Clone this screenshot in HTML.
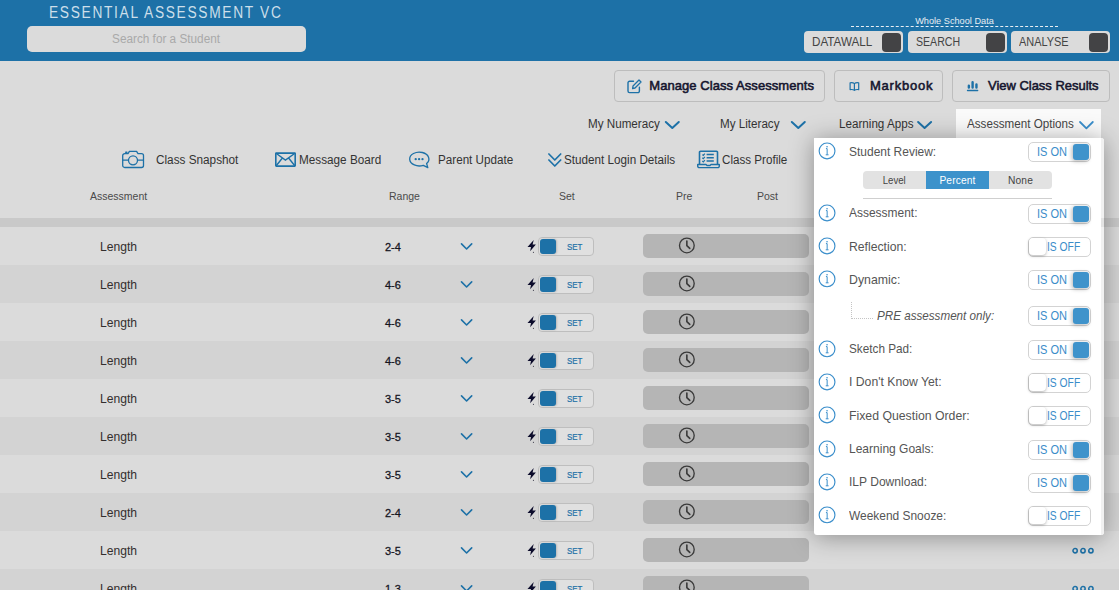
<!DOCTYPE html>
<html><head><meta charset="utf-8"><title>Essential Assessment</title>
<style>
*{box-sizing:border-box;margin:0;padding:0}
html,body{width:1119px;height:590px;overflow:hidden;background:#dbdbdb;font-family:"Liberation Sans",sans-serif;color:#333}
.abs{position:absolute}
svg{position:absolute;overflow:visible}
#hdr{position:absolute;left:0;top:0;width:1119px;height:61px;background:#1d71a7}
#title{position:absolute;left:49.4px;top:3px;font-size:16px;color:rgba(255,255,255,.78);white-space:nowrap;line-height:20px}
#search{position:absolute;left:27px;top:26px;width:279px;height:26px;background:#dbdbdb;border-radius:5px;text-align:center;font-size:12px;line-height:26px;color:#a9a9a9}
#wsd{position:absolute;left:851px;top:14px;width:207px;height:13px;padding-top:0.7px;border-bottom:1px dashed #e8eef3;text-align:center;font-size:9.2px;color:#e8eef3;line-height:12px}
.hb{position:absolute;top:31px;height:22px;width:99px;background:#dbdbdb;border-radius:4px;font-size:12px;color:#444;line-height:22px;padding-left:8px;white-space:nowrap}
.hb i{position:absolute;right:2px;top:2px;width:19px;height:19px;background:#434345;border-radius:4px}
.btn{position:absolute;top:70px;height:32px;border:1px solid #bdbdbd;border-radius:4px;background:#dcdcdc;font-size:13px;font-weight:normal;-webkit-text-stroke:0.55px #15152e;color:#15152e;line-height:30px;white-space:nowrap}
.nav{position:absolute;top:117px;font-size:12px;color:#333;line-height:14px;white-space:nowrap}
.lnk{position:absolute;top:152.8px;font-size:12px;color:#333;line-height:14px;white-space:nowrap}
.th{position:absolute;top:190px;font-size:10.5px;color:#4a4a4a;line-height:12px;white-space:nowrap}
.row{position:absolute;left:0;width:1119px;height:38px}
.row.d{background:#d3d3d3}
.nm{position:absolute;left:100px;top:12px;font-size:13px;line-height:15px;color:#332e2e;white-space:nowrap}
.rg{position:absolute;left:385px;top:13px;font-size:11.5px;line-height:15px;color:#15151f;-webkit-text-stroke:0.3px #15151f;white-space:nowrap}
.tg{position:absolute;left:538px;top:10px;width:56px;height:19px;border:1px solid #bebebe;border-radius:4px;background:#e0e0e0;font-size:9.5px;color:#1d71a7;-webkit-text-stroke:0.2px #1d71a7;line-height:17px;padding-left:28px;white-space:nowrap}
.tg i{position:absolute;left:1px;top:1px;width:16px;height:15px;background:#1d71a7;border-radius:3px;box-shadow:1px 0 2px rgba(0,0,0,.18)}
.bar{position:absolute;left:643px;top:7px;width:166px;height:24px;border-radius:5px;background:#b5b5b5}
#panel{position:absolute;left:814px;top:138px;width:290px;height:397px;background:#fff;border-radius:0 3px 3px 3px;box-shadow:0 2px 25px rgba(0,0,0,.36)}
#panel:after{content:"";position:absolute;right:0;top:0;width:3px;height:100%;border-radius:0 3px 3px 0;background:linear-gradient(#f1f1f1 80px,#e3e3e3 80px,#e3e3e3 89px,#f1f1f1 89px)}
#tab{position:absolute;left:956px;top:109px;width:145px;height:30px;background:#fafafa}
.opt{position:absolute;left:0;width:290px;height:20px}
.lb{position:absolute;left:35px;top:2px;font-size:13px;line-height:15px;color:#555;white-space:nowrap}
.sw{position:absolute;left:214px;top:0;width:63px;height:20px;border:1px solid #d3d3d3;border-radius:5px;background:#fff;font-size:12.5px;color:#3a8cc9;line-height:18px;white-space:nowrap}
.sw.on{padding-left:7.6px}
.sw.on i{position:absolute;right:1px;top:1px;width:16px;height:16px;background:#3f93cb;border-radius:3px;box-shadow:-1px 1px 4px rgba(0,0,0,.3)}
.sw.off{padding-left:18px}
.sw.off i{position:absolute;left:0px;top:0px;width:17px;height:17px;background:#fff;border-radius:4px;box-shadow:0 1px 3px rgba(0,0,0,.3)}
.seg{position:absolute;top:33px;height:18px;width:63px;background:#e2e2e2;font-size:10.2px;color:#444;text-align:center;line-height:18px;padding-top:1px;white-space:nowrap}
</style></head><body>
<div id="hdr">
 <div id="title"><span style="display:inline-block;transform:scaleX(0.86);transform-origin:0 50%;letter-spacing:1.95px">ESSENTIAL ASSESSMENT VC</span></div>
 <div id="search"><span style="display:inline-block;transform:scaleX(0.981);transform-origin:50% 50%">Search for a Student</span></div>
 <div id="wsd">Whole School Data</div>
 <div class="hb" style="left:804px"><span style="display:inline-block;transform:scaleX(0.971);transform-origin:0 50%">DATAWALL</span><i></i></div>
 <div class="hb" style="left:908px"><span style="display:inline-block;transform:scaleX(0.882);transform-origin:0 50%">SEARCH</span><i></i></div>
 <div class="hb" style="left:1011px"><span style="display:inline-block;transform:scaleX(0.911);transform-origin:0 50%">ANALYSE</span><i></i></div>
</div>
<div class="btn" style="left:614px;width:211px;padding-left:34.3px"><svg style="left:12px;top:8px" width="15" height="15" viewBox="0 0 15 15"><path d="M6.5 2.2 H2.6 A1.6 1.6 0 0 0 1 3.8 V12 A1.6 1.6 0 0 0 2.6 13.6 H10.8 A1.6 1.6 0 0 0 12.4 12 V8.2" fill="none" stroke="#1d71a7" stroke-width="1.4" stroke-linecap="round"/><path d="M12 1 L14 3 L8 9 L5.6 9.5 L6 7 Z" fill="none" stroke="#1d71a7" stroke-width="1.3" stroke-linejoin="round"/></svg><span style="letter-spacing:0.06px">Manage Class Assessments</span></div>
<div class="btn" style="left:834px;width:109px;padding-left:35px"><svg style="left:14px;top:11px" width="10" height="9" viewBox="0 0 10 9"><g transform="translate(0.4 0.0)"><path d="M5 1.6 C4 0.7 2.4 0.6 0.7 0.8 V7.6 C2.4 7.4 4 7.5 5 8.4 C6 7.5 7.6 7.4 9.3 7.6 V0.8 C7.6 0.6 6 0.7 5 1.6 V8.2" fill="none" stroke="#1d71a7" stroke-width="1.2" stroke-linejoin="round"/></g></svg><span style="letter-spacing:0.76px">Markbook</span></div>
<div class="btn" style="left:952px;width:158px;padding-left:35px"><svg style="left:13px;top:9px" width="12" height="12" viewBox="0 0 12 12"><g transform="translate(0.5 0.0)"><path d="M2.35 5.7 V7.6 M6.1 2.2 V7.6 M9.95 4.4 V7.6" stroke="#1d71a7" stroke-width="2.4" stroke-linecap="round"/><path d="M1 10.5 H11.2" stroke="#1d71a7" stroke-width="1.3" stroke-linecap="round"/></g></svg><span style="display:inline-block;transform:scaleX(0.996);transform-origin:0 50%">View Class Results</span></div>

<div class="nav" style="left:588px"><span style="display:inline-block;transform:scaleX(0.971);transform-origin:0 50%">My Numeracy</span></div><svg style="left:665px;top:121px" width="14.6" height="7.7" viewBox="0 0 14.6 7.7"><g transform="translate(0.0 0.2)"><path d="M0.8 0.8 L7.3 6.8 L13.799999999999999 0.8" fill="none" stroke="#1d71a7" stroke-width="2" stroke-linecap="round" stroke-linejoin="round"/></g></svg>
<div class="nav" style="left:720px"><span style="display:inline-block;transform:scaleX(0.97);transform-origin:0 50%">My Literacy</span></div><svg style="left:791px;top:121px" width="14.6" height="7.7" viewBox="0 0 14.6 7.7"><g transform="translate(0.0 0.2)"><path d="M0.8 0.8 L7.3 6.8 L13.799999999999999 0.8" fill="none" stroke="#1d71a7" stroke-width="2" stroke-linecap="round" stroke-linejoin="round"/></g></svg>
<div class="nav" style="left:838.5px"><span style="display:inline-block;transform:scaleX(0.971);transform-origin:0 50%">Learning Apps</span></div><svg style="left:917px;top:121px" width="14.6" height="7.7" viewBox="0 0 14.6 7.7"><g transform="translate(0.3 0.2)"><path d="M0.8 0.8 L7.3 6.8 L13.799999999999999 0.8" fill="none" stroke="#1d71a7" stroke-width="2" stroke-linecap="round" stroke-linejoin="round"/></g></svg>
<div id="tab"></div>
<div class="nav" style="left:967px;color:#454545"><span style="display:inline-block;transform:scaleX(0.97);transform-origin:0 50%">Assessment Options</span></div><svg style="left:1079px;top:121px" width="14.4" height="8" viewBox="0 0 14.4 8"><g transform="translate(0.2 0.2)"><path d="M0.8 0.8 L7.2 7.1 L13.6 0.8" fill="none" stroke="#3a8ecb" stroke-width="1.8" stroke-linecap="round" stroke-linejoin="round"/></g></svg>

<svg style="left:122px;top:150px" width="22" height="18" viewBox="0 0 22 18"><g transform="translate(0.0 0.5)"><path d="M2.7 3.1 H6 L7.4 0.9 H14.6 L16 3.1 H19.5 A2 2 0 0 1 21.5 5.1 V15 A2 2 0 0 1 19.5 17 H2.7 A2 2 0 0 1 0.7 15 V5.1 A2 2 0 0 1 2.7 3.1 Z" fill="none" stroke="#1d71a7" stroke-width="1.3" stroke-linejoin="round"/><circle cx="11" cy="9.8" r="4.5" fill="none" stroke="#1d71a7" stroke-width="1.3"/><path d="M0.7 9.6 H6.4 M15.6 9.6 H21.5" stroke="#1d71a7" stroke-width="1.1"/><path d="M3 2.6 L3.4 1 H5.2 L5.7 2.6 Z" fill="#1d71a7"/></g></svg><div class="lnk" style="left:156px"><span style="display:inline-block;transform:scaleX(0.98);transform-origin:0 50%">Class Snapshot</span></div>
<svg style="left:275px;top:152px" width="21" height="14.7" viewBox="0 0 21 14.7"><g transform="translate(0.0 0.3)"><rect x="0.8" y="0.8" width="19.4" height="13" rx="0.5" fill="none" stroke="#1d71a7" stroke-width="1.6"/><path d="M1 1 L10.4 7.8 L20 1 M1 13.7 L7.2 6 M20 13.7 L13.8 6" fill="none" stroke="#1d71a7" stroke-width="1.4"/></g></svg><div class="lnk" style="left:299px"><span style="display:inline-block;transform:scaleX(0.978);transform-origin:0 50%">Message Board</span></div>
<svg style="left:409px;top:151px" width="21" height="17" viewBox="0 0 21 17"><path d="M17.6 12.5 A9.6 6.9 0 1 0 14.3 14.3 L18.8 16.6 Z" fill="none" stroke="#1d71a7" stroke-width="1.3" stroke-linejoin="round"/><circle cx="6.7" cy="8.2" r="1.15" fill="#1d71a7"/><circle cx="10.1" cy="8.2" r="1.15" fill="#1d71a7"/><circle cx="13.5" cy="8.2" r="1.15" fill="#1d71a7"/></svg><div class="lnk" style="left:438px"><span style="display:inline-block;transform:scaleX(0.972);transform-origin:0 50%">Parent Update</span></div>
<svg style="left:548px;top:153px" width="14" height="14" viewBox="0 0 14 14"><path d="M0.9 1 L6.8 7 L12.7 1 M0.9 7 L6.8 13 L12.7 7" fill="none" stroke="#1d71a7" stroke-width="1.7" stroke-linecap="round" stroke-linejoin="round"/></svg><div class="lnk" style="left:564px"><span style="display:inline-block;transform:scaleX(0.974);transform-origin:0 50%">Student Login Details</span></div>
<svg style="left:697px;top:150px" width="23" height="18" viewBox="0 0 23 18"><g transform="translate(0.0 0.5)"><path d="M2.5 13.8 V1.8 A1 1 0 0 1 3.5 0.8 H19.5 A1 1 0 0 1 20.5 1.8 V13.8" fill="none" stroke="#1d71a7" stroke-width="1.6"/><path d="M0.7 14 H9 L10 15 H13 L14 14 H22.3 V15.5 A1.6 1.6 0 0 1 20.7 17.1 H2.3 A1.6 1.6 0 0 1 0.7 15.5 Z" fill="none" stroke="#1d71a7" stroke-width="1.4" stroke-linejoin="round"/><path d="M9.6 4.1 H16.8 M9.6 7.3 H16.8 M9.6 10.5 H16.8" stroke="#1d71a7" stroke-width="1.5"/><path d="M5.3 4.1 L6.3 5 L7.9 3.2 M5.3 7.3 L6.3 8.2 L7.9 6.4 M5.3 10.5 L6.3 11.4 L7.9 9.6" fill="none" stroke="#1d71a7" stroke-width="1.15"/></g></svg><div class="lnk" style="left:722px"><span style="display:inline-block;transform:scaleX(0.969);transform-origin:0 50%">Class Profile</span></div>

<div class="th" style="left:90px">Assessment</div>
<div class="th" style="left:389px">Range</div>
<div class="th" style="left:559px">Set</div>
<div class="th" style="left:676px">Pre</div>
<div class="th" style="left:757px">Post</div>
<div class="abs" style="left:0;top:218px;width:1119px;height:9px;background:#c9c9c9"></div>
<div class="row" style="top:227px"><div class="nm"><span style="display:inline-block;transform:scaleX(0.933);transform-origin:0 50%">Length</span></div><div class="rg"><span style="display:inline-block;transform:scaleX(0.956);transform-origin:0 50%">2-4</span></div><svg style="left:460px;top:16px" width="11.8" height="6.8" viewBox="0 0 11.8 6.8"><g transform="translate(0.7 0.1)"><path d="M0.8 0.8 L5.9 5.8999999999999995 L11.0 0.8" fill="none" stroke="#1d71a7" stroke-width="1.6" stroke-linecap="round" stroke-linejoin="round"/></g></svg><svg style="left:527px;top:12px" width="9" height="13" viewBox="0 0 9 13"><g transform="translate(0.0 0.8)"><path d="M6.7 0.1 L0.5 7.2 H4 L3.1 11.4 L8.9 4.6 H5.6 Z" fill="#0b0b2b"/><circle cx="6.45" cy="12.5" r="0.55" fill="#223"/></g></svg><div class="tg"><i></i><span style="display:inline-block;transform:scaleX(0.833);transform-origin:0 50%">SET</span></div><div class="bar"></div><svg style="left:678px;top:10px" width="16" height="16" viewBox="0 0 16 16"><g transform="translate(0.85 0.45)"><circle cx="8" cy="8" r="7.35" fill="none" stroke="#3a3a3a" stroke-width="1.35"/><path d="M8 3.6 V8.2 L10.9 11" fill="none" stroke="#3a3a3a" stroke-width="1.6" stroke-linecap="round" stroke-linejoin="round"/></g></svg><svg style="left:1072px;top:16px" width="22" height="7" viewBox="0 0 22 7"><g transform="translate(0.0 0.2)"><circle cx="3.1" cy="3.5" r="2.15" fill="none" stroke="#1d71a7" stroke-width="1.55"/><circle cx="11" cy="3.5" r="2.15" fill="none" stroke="#1d71a7" stroke-width="1.55"/><circle cx="18.9" cy="3.5" r="2.15" fill="none" stroke="#1d71a7" stroke-width="1.55"/></g></svg></div>
<div class="row d" style="top:265px"><div class="nm"><span style="display:inline-block;transform:scaleX(0.933);transform-origin:0 50%">Length</span></div><div class="rg"><span style="display:inline-block;transform:scaleX(0.956);transform-origin:0 50%">4-6</span></div><svg style="left:460px;top:16px" width="11.8" height="6.8" viewBox="0 0 11.8 6.8"><g transform="translate(0.7 0.1)"><path d="M0.8 0.8 L5.9 5.8999999999999995 L11.0 0.8" fill="none" stroke="#1d71a7" stroke-width="1.6" stroke-linecap="round" stroke-linejoin="round"/></g></svg><svg style="left:527px;top:12px" width="9" height="13" viewBox="0 0 9 13"><g transform="translate(0.0 0.8)"><path d="M6.7 0.1 L0.5 7.2 H4 L3.1 11.4 L8.9 4.6 H5.6 Z" fill="#0b0b2b"/><circle cx="6.45" cy="12.5" r="0.55" fill="#223"/></g></svg><div class="tg"><i></i><span style="display:inline-block;transform:scaleX(0.833);transform-origin:0 50%">SET</span></div><div class="bar"></div><svg style="left:678px;top:10px" width="16" height="16" viewBox="0 0 16 16"><g transform="translate(0.85 0.45)"><circle cx="8" cy="8" r="7.35" fill="none" stroke="#3a3a3a" stroke-width="1.35"/><path d="M8 3.6 V8.2 L10.9 11" fill="none" stroke="#3a3a3a" stroke-width="1.6" stroke-linecap="round" stroke-linejoin="round"/></g></svg><svg style="left:1072px;top:16px" width="22" height="7" viewBox="0 0 22 7"><g transform="translate(0.0 0.2)"><circle cx="3.1" cy="3.5" r="2.15" fill="none" stroke="#1d71a7" stroke-width="1.55"/><circle cx="11" cy="3.5" r="2.15" fill="none" stroke="#1d71a7" stroke-width="1.55"/><circle cx="18.9" cy="3.5" r="2.15" fill="none" stroke="#1d71a7" stroke-width="1.55"/></g></svg></div>
<div class="row" style="top:303px"><div class="nm"><span style="display:inline-block;transform:scaleX(0.933);transform-origin:0 50%">Length</span></div><div class="rg"><span style="display:inline-block;transform:scaleX(0.956);transform-origin:0 50%">4-6</span></div><svg style="left:460px;top:16px" width="11.8" height="6.8" viewBox="0 0 11.8 6.8"><g transform="translate(0.7 0.1)"><path d="M0.8 0.8 L5.9 5.8999999999999995 L11.0 0.8" fill="none" stroke="#1d71a7" stroke-width="1.6" stroke-linecap="round" stroke-linejoin="round"/></g></svg><svg style="left:527px;top:12px" width="9" height="13" viewBox="0 0 9 13"><g transform="translate(0.0 0.8)"><path d="M6.7 0.1 L0.5 7.2 H4 L3.1 11.4 L8.9 4.6 H5.6 Z" fill="#0b0b2b"/><circle cx="6.45" cy="12.5" r="0.55" fill="#223"/></g></svg><div class="tg"><i></i><span style="display:inline-block;transform:scaleX(0.833);transform-origin:0 50%">SET</span></div><div class="bar"></div><svg style="left:678px;top:10px" width="16" height="16" viewBox="0 0 16 16"><g transform="translate(0.85 0.45)"><circle cx="8" cy="8" r="7.35" fill="none" stroke="#3a3a3a" stroke-width="1.35"/><path d="M8 3.6 V8.2 L10.9 11" fill="none" stroke="#3a3a3a" stroke-width="1.6" stroke-linecap="round" stroke-linejoin="round"/></g></svg><svg style="left:1072px;top:16px" width="22" height="7" viewBox="0 0 22 7"><g transform="translate(0.0 0.2)"><circle cx="3.1" cy="3.5" r="2.15" fill="none" stroke="#1d71a7" stroke-width="1.55"/><circle cx="11" cy="3.5" r="2.15" fill="none" stroke="#1d71a7" stroke-width="1.55"/><circle cx="18.9" cy="3.5" r="2.15" fill="none" stroke="#1d71a7" stroke-width="1.55"/></g></svg></div>
<div class="row d" style="top:341px"><div class="nm"><span style="display:inline-block;transform:scaleX(0.933);transform-origin:0 50%">Length</span></div><div class="rg"><span style="display:inline-block;transform:scaleX(0.956);transform-origin:0 50%">4-6</span></div><svg style="left:460px;top:16px" width="11.8" height="6.8" viewBox="0 0 11.8 6.8"><g transform="translate(0.7 0.1)"><path d="M0.8 0.8 L5.9 5.8999999999999995 L11.0 0.8" fill="none" stroke="#1d71a7" stroke-width="1.6" stroke-linecap="round" stroke-linejoin="round"/></g></svg><svg style="left:527px;top:12px" width="9" height="13" viewBox="0 0 9 13"><g transform="translate(0.0 0.8)"><path d="M6.7 0.1 L0.5 7.2 H4 L3.1 11.4 L8.9 4.6 H5.6 Z" fill="#0b0b2b"/><circle cx="6.45" cy="12.5" r="0.55" fill="#223"/></g></svg><div class="tg"><i></i><span style="display:inline-block;transform:scaleX(0.833);transform-origin:0 50%">SET</span></div><div class="bar"></div><svg style="left:678px;top:10px" width="16" height="16" viewBox="0 0 16 16"><g transform="translate(0.85 0.45)"><circle cx="8" cy="8" r="7.35" fill="none" stroke="#3a3a3a" stroke-width="1.35"/><path d="M8 3.6 V8.2 L10.9 11" fill="none" stroke="#3a3a3a" stroke-width="1.6" stroke-linecap="round" stroke-linejoin="round"/></g></svg><svg style="left:1072px;top:16px" width="22" height="7" viewBox="0 0 22 7"><g transform="translate(0.0 0.2)"><circle cx="3.1" cy="3.5" r="2.15" fill="none" stroke="#1d71a7" stroke-width="1.55"/><circle cx="11" cy="3.5" r="2.15" fill="none" stroke="#1d71a7" stroke-width="1.55"/><circle cx="18.9" cy="3.5" r="2.15" fill="none" stroke="#1d71a7" stroke-width="1.55"/></g></svg></div>
<div class="row" style="top:379px"><div class="nm"><span style="display:inline-block;transform:scaleX(0.933);transform-origin:0 50%">Length</span></div><div class="rg"><span style="display:inline-block;transform:scaleX(0.956);transform-origin:0 50%">3-5</span></div><svg style="left:460px;top:16px" width="11.8" height="6.8" viewBox="0 0 11.8 6.8"><g transform="translate(0.7 0.1)"><path d="M0.8 0.8 L5.9 5.8999999999999995 L11.0 0.8" fill="none" stroke="#1d71a7" stroke-width="1.6" stroke-linecap="round" stroke-linejoin="round"/></g></svg><svg style="left:527px;top:12px" width="9" height="13" viewBox="0 0 9 13"><g transform="translate(0.0 0.8)"><path d="M6.7 0.1 L0.5 7.2 H4 L3.1 11.4 L8.9 4.6 H5.6 Z" fill="#0b0b2b"/><circle cx="6.45" cy="12.5" r="0.55" fill="#223"/></g></svg><div class="tg"><i></i><span style="display:inline-block;transform:scaleX(0.833);transform-origin:0 50%">SET</span></div><div class="bar"></div><svg style="left:678px;top:10px" width="16" height="16" viewBox="0 0 16 16"><g transform="translate(0.85 0.45)"><circle cx="8" cy="8" r="7.35" fill="none" stroke="#3a3a3a" stroke-width="1.35"/><path d="M8 3.6 V8.2 L10.9 11" fill="none" stroke="#3a3a3a" stroke-width="1.6" stroke-linecap="round" stroke-linejoin="round"/></g></svg><svg style="left:1072px;top:16px" width="22" height="7" viewBox="0 0 22 7"><g transform="translate(0.0 0.2)"><circle cx="3.1" cy="3.5" r="2.15" fill="none" stroke="#1d71a7" stroke-width="1.55"/><circle cx="11" cy="3.5" r="2.15" fill="none" stroke="#1d71a7" stroke-width="1.55"/><circle cx="18.9" cy="3.5" r="2.15" fill="none" stroke="#1d71a7" stroke-width="1.55"/></g></svg></div>
<div class="row d" style="top:417px"><div class="nm"><span style="display:inline-block;transform:scaleX(0.933);transform-origin:0 50%">Length</span></div><div class="rg"><span style="display:inline-block;transform:scaleX(0.956);transform-origin:0 50%">3-5</span></div><svg style="left:460px;top:16px" width="11.8" height="6.8" viewBox="0 0 11.8 6.8"><g transform="translate(0.7 0.1)"><path d="M0.8 0.8 L5.9 5.8999999999999995 L11.0 0.8" fill="none" stroke="#1d71a7" stroke-width="1.6" stroke-linecap="round" stroke-linejoin="round"/></g></svg><svg style="left:527px;top:12px" width="9" height="13" viewBox="0 0 9 13"><g transform="translate(0.0 0.8)"><path d="M6.7 0.1 L0.5 7.2 H4 L3.1 11.4 L8.9 4.6 H5.6 Z" fill="#0b0b2b"/><circle cx="6.45" cy="12.5" r="0.55" fill="#223"/></g></svg><div class="tg"><i></i><span style="display:inline-block;transform:scaleX(0.833);transform-origin:0 50%">SET</span></div><div class="bar"></div><svg style="left:678px;top:10px" width="16" height="16" viewBox="0 0 16 16"><g transform="translate(0.85 0.45)"><circle cx="8" cy="8" r="7.35" fill="none" stroke="#3a3a3a" stroke-width="1.35"/><path d="M8 3.6 V8.2 L10.9 11" fill="none" stroke="#3a3a3a" stroke-width="1.6" stroke-linecap="round" stroke-linejoin="round"/></g></svg><svg style="left:1072px;top:16px" width="22" height="7" viewBox="0 0 22 7"><g transform="translate(0.0 0.2)"><circle cx="3.1" cy="3.5" r="2.15" fill="none" stroke="#1d71a7" stroke-width="1.55"/><circle cx="11" cy="3.5" r="2.15" fill="none" stroke="#1d71a7" stroke-width="1.55"/><circle cx="18.9" cy="3.5" r="2.15" fill="none" stroke="#1d71a7" stroke-width="1.55"/></g></svg></div>
<div class="row" style="top:455px"><div class="nm"><span style="display:inline-block;transform:scaleX(0.933);transform-origin:0 50%">Length</span></div><div class="rg"><span style="display:inline-block;transform:scaleX(0.956);transform-origin:0 50%">3-5</span></div><svg style="left:460px;top:16px" width="11.8" height="6.8" viewBox="0 0 11.8 6.8"><g transform="translate(0.7 0.1)"><path d="M0.8 0.8 L5.9 5.8999999999999995 L11.0 0.8" fill="none" stroke="#1d71a7" stroke-width="1.6" stroke-linecap="round" stroke-linejoin="round"/></g></svg><svg style="left:527px;top:12px" width="9" height="13" viewBox="0 0 9 13"><g transform="translate(0.0 0.8)"><path d="M6.7 0.1 L0.5 7.2 H4 L3.1 11.4 L8.9 4.6 H5.6 Z" fill="#0b0b2b"/><circle cx="6.45" cy="12.5" r="0.55" fill="#223"/></g></svg><div class="tg"><i></i><span style="display:inline-block;transform:scaleX(0.833);transform-origin:0 50%">SET</span></div><div class="bar"></div><svg style="left:678px;top:10px" width="16" height="16" viewBox="0 0 16 16"><g transform="translate(0.85 0.45)"><circle cx="8" cy="8" r="7.35" fill="none" stroke="#3a3a3a" stroke-width="1.35"/><path d="M8 3.6 V8.2 L10.9 11" fill="none" stroke="#3a3a3a" stroke-width="1.6" stroke-linecap="round" stroke-linejoin="round"/></g></svg><svg style="left:1072px;top:16px" width="22" height="7" viewBox="0 0 22 7"><g transform="translate(0.0 0.2)"><circle cx="3.1" cy="3.5" r="2.15" fill="none" stroke="#1d71a7" stroke-width="1.55"/><circle cx="11" cy="3.5" r="2.15" fill="none" stroke="#1d71a7" stroke-width="1.55"/><circle cx="18.9" cy="3.5" r="2.15" fill="none" stroke="#1d71a7" stroke-width="1.55"/></g></svg></div>
<div class="row d" style="top:493px"><div class="nm"><span style="display:inline-block;transform:scaleX(0.933);transform-origin:0 50%">Length</span></div><div class="rg"><span style="display:inline-block;transform:scaleX(0.956);transform-origin:0 50%">2-4</span></div><svg style="left:460px;top:16px" width="11.8" height="6.8" viewBox="0 0 11.8 6.8"><g transform="translate(0.7 0.1)"><path d="M0.8 0.8 L5.9 5.8999999999999995 L11.0 0.8" fill="none" stroke="#1d71a7" stroke-width="1.6" stroke-linecap="round" stroke-linejoin="round"/></g></svg><svg style="left:527px;top:12px" width="9" height="13" viewBox="0 0 9 13"><g transform="translate(0.0 0.8)"><path d="M6.7 0.1 L0.5 7.2 H4 L3.1 11.4 L8.9 4.6 H5.6 Z" fill="#0b0b2b"/><circle cx="6.45" cy="12.5" r="0.55" fill="#223"/></g></svg><div class="tg"><i></i><span style="display:inline-block;transform:scaleX(0.833);transform-origin:0 50%">SET</span></div><div class="bar"></div><svg style="left:678px;top:10px" width="16" height="16" viewBox="0 0 16 16"><g transform="translate(0.85 0.45)"><circle cx="8" cy="8" r="7.35" fill="none" stroke="#3a3a3a" stroke-width="1.35"/><path d="M8 3.6 V8.2 L10.9 11" fill="none" stroke="#3a3a3a" stroke-width="1.6" stroke-linecap="round" stroke-linejoin="round"/></g></svg><svg style="left:1072px;top:16px" width="22" height="7" viewBox="0 0 22 7"><g transform="translate(0.0 0.2)"><circle cx="3.1" cy="3.5" r="2.15" fill="none" stroke="#1d71a7" stroke-width="1.55"/><circle cx="11" cy="3.5" r="2.15" fill="none" stroke="#1d71a7" stroke-width="1.55"/><circle cx="18.9" cy="3.5" r="2.15" fill="none" stroke="#1d71a7" stroke-width="1.55"/></g></svg></div>
<div class="row" style="top:531px"><div class="nm"><span style="display:inline-block;transform:scaleX(0.933);transform-origin:0 50%">Length</span></div><div class="rg"><span style="display:inline-block;transform:scaleX(0.956);transform-origin:0 50%">3-5</span></div><svg style="left:460px;top:16px" width="11.8" height="6.8" viewBox="0 0 11.8 6.8"><g transform="translate(0.7 0.1)"><path d="M0.8 0.8 L5.9 5.8999999999999995 L11.0 0.8" fill="none" stroke="#1d71a7" stroke-width="1.6" stroke-linecap="round" stroke-linejoin="round"/></g></svg><svg style="left:527px;top:12px" width="9" height="13" viewBox="0 0 9 13"><g transform="translate(0.0 0.8)"><path d="M6.7 0.1 L0.5 7.2 H4 L3.1 11.4 L8.9 4.6 H5.6 Z" fill="#0b0b2b"/><circle cx="6.45" cy="12.5" r="0.55" fill="#223"/></g></svg><div class="tg"><i></i><span style="display:inline-block;transform:scaleX(0.833);transform-origin:0 50%">SET</span></div><div class="bar"></div><svg style="left:678px;top:10px" width="16" height="16" viewBox="0 0 16 16"><g transform="translate(0.85 0.45)"><circle cx="8" cy="8" r="7.35" fill="none" stroke="#3a3a3a" stroke-width="1.35"/><path d="M8 3.6 V8.2 L10.9 11" fill="none" stroke="#3a3a3a" stroke-width="1.6" stroke-linecap="round" stroke-linejoin="round"/></g></svg><svg style="left:1072px;top:16px" width="22" height="7" viewBox="0 0 22 7"><g transform="translate(0.0 0.2)"><circle cx="3.1" cy="3.5" r="2.15" fill="none" stroke="#1d71a7" stroke-width="1.55"/><circle cx="11" cy="3.5" r="2.15" fill="none" stroke="#1d71a7" stroke-width="1.55"/><circle cx="18.9" cy="3.5" r="2.15" fill="none" stroke="#1d71a7" stroke-width="1.55"/></g></svg></div>
<div class="row d" style="top:569px"><div class="nm"><span style="display:inline-block;transform:scaleX(0.933);transform-origin:0 50%">Length</span></div><div class="rg"><span style="display:inline-block;transform:scaleX(0.956);transform-origin:0 50%">1-3</span></div><svg style="left:460px;top:16px" width="11.8" height="6.8" viewBox="0 0 11.8 6.8"><g transform="translate(0.7 0.1)"><path d="M0.8 0.8 L5.9 5.8999999999999995 L11.0 0.8" fill="none" stroke="#1d71a7" stroke-width="1.6" stroke-linecap="round" stroke-linejoin="round"/></g></svg><svg style="left:527px;top:12px" width="9" height="13" viewBox="0 0 9 13"><g transform="translate(0.0 0.8)"><path d="M6.7 0.1 L0.5 7.2 H4 L3.1 11.4 L8.9 4.6 H5.6 Z" fill="#0b0b2b"/><circle cx="6.45" cy="12.5" r="0.55" fill="#223"/></g></svg><div class="tg"><i></i><span style="display:inline-block;transform:scaleX(0.833);transform-origin:0 50%">SET</span></div><div class="bar"></div><svg style="left:678px;top:10px" width="16" height="16" viewBox="0 0 16 16"><g transform="translate(0.85 0.45)"><circle cx="8" cy="8" r="7.35" fill="none" stroke="#3a3a3a" stroke-width="1.35"/><path d="M8 3.6 V8.2 L10.9 11" fill="none" stroke="#3a3a3a" stroke-width="1.6" stroke-linecap="round" stroke-linejoin="round"/></g></svg><svg style="left:1072px;top:16px" width="22" height="7" viewBox="0 0 22 7"><g transform="translate(0.0 0.2)"><circle cx="3.1" cy="3.5" r="2.15" fill="none" stroke="#1d71a7" stroke-width="1.55"/><circle cx="11" cy="3.5" r="2.15" fill="none" stroke="#1d71a7" stroke-width="1.55"/><circle cx="18.9" cy="3.5" r="2.15" fill="none" stroke="#1d71a7" stroke-width="1.55"/></g></svg></div>

<div id="panel">
<div class="opt" style="top:4px"><svg style="left:4px;top:0px" width="17" height="17" viewBox="0 0 17 17"><g transform="translate(0.55 0.4)"><circle cx="8.5" cy="8.5" r="7.9" fill="none" stroke="#3a8ecb" stroke-width="1.15"/><circle cx="8.5" cy="4.3" r="0.8" fill="#3a8ecb"/><path d="M7.4 6.2 H8.6 V12.3 M7.2 12.4 H10" fill="none" stroke="#3a8ecb" stroke-width="1"/></g></svg><div class="lb" style="top:2px"><span style="display:inline-block;transform:scaleX(0.921);transform-origin:0 50%">Student Review:</span></div><div class="sw on"><span style="display:inline-block;transform:scaleX(0.884);transform-origin:0 50%">IS ON</span><i></i></div></div>
<div class="opt" style="top:66px"><svg style="left:4px;top:0px" width="17" height="17" viewBox="0 0 17 17"><g transform="translate(0.55 0.4)"><circle cx="8.5" cy="8.5" r="7.9" fill="none" stroke="#3a8ecb" stroke-width="1.15"/><circle cx="8.5" cy="4.3" r="0.8" fill="#3a8ecb"/><path d="M7.4 6.2 H8.6 V12.3 M7.2 12.4 H10" fill="none" stroke="#3a8ecb" stroke-width="1"/></g></svg><div class="lb" style="top:1px"><span style="display:inline-block;transform:scaleX(0.92);transform-origin:0 50%">Assessment:</span></div><div class="sw on"><span style="display:inline-block;transform:scaleX(0.884);transform-origin:0 50%">IS ON</span><i></i></div></div>
<div class="opt" style="top:99px"><svg style="left:4px;top:0px" width="17" height="17" viewBox="0 0 17 17"><g transform="translate(0.55 0.4)"><circle cx="8.5" cy="8.5" r="7.9" fill="none" stroke="#3a8ecb" stroke-width="1.15"/><circle cx="8.5" cy="4.3" r="0.8" fill="#3a8ecb"/><path d="M7.4 6.2 H8.6 V12.3 M7.2 12.4 H10" fill="none" stroke="#3a8ecb" stroke-width="1"/></g></svg><div class="lb" style="top:2px"><span style="display:inline-block;transform:scaleX(0.938);transform-origin:0 50%">Reflection:</span></div><div class="sw off"><i></i><span style="display:inline-block;transform:scaleX(0.824);transform-origin:0 50%">IS OFF</span></div></div>
<div class="opt" style="top:132px"><svg style="left:4px;top:0px" width="17" height="17" viewBox="0 0 17 17"><g transform="translate(0.55 0.4)"><circle cx="8.5" cy="8.5" r="7.9" fill="none" stroke="#3a8ecb" stroke-width="1.15"/><circle cx="8.5" cy="4.3" r="0.8" fill="#3a8ecb"/><path d="M7.4 6.2 H8.6 V12.3 M7.2 12.4 H10" fill="none" stroke="#3a8ecb" stroke-width="1"/></g></svg><div class="lb" style="top:2px"><span style="display:inline-block;transform:scaleX(0.947);transform-origin:0 50%">Dynamic:</span></div><div class="sw on"><span style="display:inline-block;transform:scaleX(0.884);transform-origin:0 50%">IS ON</span><i></i></div></div>
<div class="opt" style="top:168px"><div class="abs" style="left:37px;top:-4px;width:22px;height:17px;border-left:1px dotted #c4c4c4;border-bottom:1px dotted #c4c4c4"></div><div class="lb" style="left:63px;font-style:italic"><span style="display:inline-block;transform:scaleX(0.896);transform-origin:0 50%">PRE assessment only:</span></div><div class="sw on"><span style="display:inline-block;transform:scaleX(0.884);transform-origin:0 50%">IS ON</span><i></i></div></div>
<div class="opt" style="top:202px"><svg style="left:4px;top:0px" width="17" height="17" viewBox="0 0 17 17"><g transform="translate(0.55 0.4)"><circle cx="8.5" cy="8.5" r="7.9" fill="none" stroke="#3a8ecb" stroke-width="1.15"/><circle cx="8.5" cy="4.3" r="0.8" fill="#3a8ecb"/><path d="M7.4 6.2 H8.6 V12.3 M7.2 12.4 H10" fill="none" stroke="#3a8ecb" stroke-width="1"/></g></svg><div class="lb" style="top:1px"><span style="display:inline-block;transform:scaleX(0.904);transform-origin:0 50%">Sketch Pad:</span></div><div class="sw on"><span style="display:inline-block;transform:scaleX(0.884);transform-origin:0 50%">IS ON</span><i></i></div></div>
<div class="opt" style="top:235px"><svg style="left:4px;top:0px" width="17" height="17" viewBox="0 0 17 17"><g transform="translate(0.55 0.4)"><circle cx="8.5" cy="8.5" r="7.9" fill="none" stroke="#3a8ecb" stroke-width="1.15"/><circle cx="8.5" cy="4.3" r="0.8" fill="#3a8ecb"/><path d="M7.4 6.2 H8.6 V12.3 M7.2 12.4 H10" fill="none" stroke="#3a8ecb" stroke-width="1"/></g></svg><div class="lb" style="top:1px"><span style="display:inline-block;transform:scaleX(0.939);transform-origin:0 50%">I Don't Know Yet:</span></div><div class="sw off"><i></i><span style="display:inline-block;transform:scaleX(0.824);transform-origin:0 50%">IS OFF</span></div></div>
<div class="opt" style="top:268px"><svg style="left:4px;top:0px" width="17" height="17" viewBox="0 0 17 17"><g transform="translate(0.55 0.4)"><circle cx="8.5" cy="8.5" r="7.9" fill="none" stroke="#3a8ecb" stroke-width="1.15"/><circle cx="8.5" cy="4.3" r="0.8" fill="#3a8ecb"/><path d="M7.4 6.2 H8.6 V12.3 M7.2 12.4 H10" fill="none" stroke="#3a8ecb" stroke-width="1"/></g></svg><div class="lb" style="top:2px"><span style="display:inline-block;transform:scaleX(0.944);transform-origin:0 50%">Fixed Question Order:</span></div><div class="sw off"><i></i><span style="display:inline-block;transform:scaleX(0.824);transform-origin:0 50%">IS OFF</span></div></div>
<div class="opt" style="top:302px"><svg style="left:4px;top:0px" width="17" height="17" viewBox="0 0 17 17"><g transform="translate(0.55 0.4)"><circle cx="8.5" cy="8.5" r="7.9" fill="none" stroke="#3a8ecb" stroke-width="1.15"/><circle cx="8.5" cy="4.3" r="0.8" fill="#3a8ecb"/><path d="M7.4 6.2 H8.6 V12.3 M7.2 12.4 H10" fill="none" stroke="#3a8ecb" stroke-width="1"/></g></svg><div class="lb" style="top:1px"><span style="display:inline-block;transform:scaleX(0.924);transform-origin:0 50%">Learning Goals:</span></div><div class="sw on"><span style="display:inline-block;transform:scaleX(0.884);transform-origin:0 50%">IS ON</span><i></i></div></div>
<div class="opt" style="top:335px"><svg style="left:4px;top:0px" width="17" height="17" viewBox="0 0 17 17"><g transform="translate(0.55 0.4)"><circle cx="8.5" cy="8.5" r="7.9" fill="none" stroke="#3a8ecb" stroke-width="1.15"/><circle cx="8.5" cy="4.3" r="0.8" fill="#3a8ecb"/><path d="M7.4 6.2 H8.6 V12.3 M7.2 12.4 H10" fill="none" stroke="#3a8ecb" stroke-width="1"/></g></svg><div class="lb" style="top:1px"><span style="display:inline-block;transform:scaleX(0.927);transform-origin:0 50%">ILP Download:</span></div><div class="sw on"><span style="display:inline-block;transform:scaleX(0.884);transform-origin:0 50%">IS ON</span><i></i></div></div>
<div class="opt" style="top:368px"><svg style="left:4px;top:0px" width="17" height="17" viewBox="0 0 17 17"><g transform="translate(0.55 0.4)"><circle cx="8.5" cy="8.5" r="7.9" fill="none" stroke="#3a8ecb" stroke-width="1.15"/><circle cx="8.5" cy="4.3" r="0.8" fill="#3a8ecb"/><path d="M7.4 6.2 H8.6 V12.3 M7.2 12.4 H10" fill="none" stroke="#3a8ecb" stroke-width="1"/></g></svg><div class="lb" style="top:2px"><span style="display:inline-block;transform:scaleX(0.918);transform-origin:0 50%">Weekend Snooze:</span></div><div class="sw off"><i></i><span style="display:inline-block;transform:scaleX(0.824);transform-origin:0 50%">IS OFF</span></div></div>
<div class="seg" style="left:49px;border-radius:4px 0 0 4px"><span style="display:inline-block;transform:scaleX(0.944);transform-origin:50% 50%">Level</span></div><div class="seg" style="left:112px;background:#3c92cb;color:#fff"><span style="letter-spacing:0.15px">Percent</span></div><div class="seg" style="left:175px;border-radius:0 4px 4px 0"><span style="letter-spacing:0.15px">None</span></div><div class="abs" style="left:49px;top:60px;width:189px;height:1px;background:#cfcfcf"></div>
</div>
</body></html>
